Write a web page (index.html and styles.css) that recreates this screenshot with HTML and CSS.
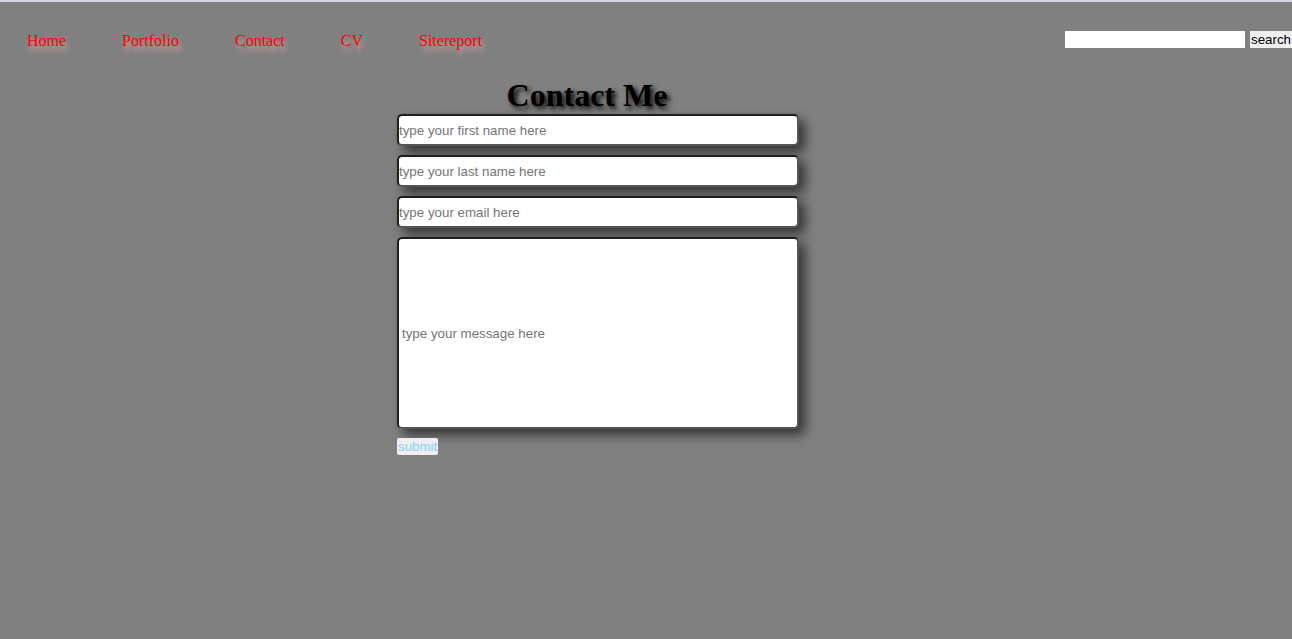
FILE: index.html
```html
<!DOCTYPE html>
<html>
<head>
<meta charset="utf-8">
<title>Contact Me</title>
<link rel="stylesheet" href="styles.css">
</head>
<body>
<header class="topbar">
  <nav class="nav">
    <a href="#" class="nav-link">Home</a>
    <a href="#" class="nav-link">Portfolio</a>
    <a href="#" class="nav-link">Contact</a>
    <a href="#" class="nav-link">CV</a>
    <a href="#" class="nav-link">Sitereport</a>
  </nav>
  <form class="search">
    <input type="text" class="search-input">
    <button type="button" class="search-btn">search</button>
  </form>
</header>
<main class="main">
  <h1 class="title">Contact Me</h1>
  <form class="contact">
    <input type="text" class="field" placeholder="type your first name here">
    <input type="text" class="field" placeholder="type your last name here">
    <input type="email" class="field" placeholder="type your email here">
    <textarea class="field message" placeholder="type your message here"></textarea>
    <button type="button" class="submit">submit</button>
  </form>
</main>
</body>
</html>
```
FILE: styles.css
```css
html {
  background: #808080;
}
body {
  margin: 0;
  border-top: 2px solid #d6d6de;
  min-height: 637px;
  background: #808080;
  font-family: "Liberation Serif", serif;
}
.topbar {
  display: flex;
  align-items: flex-start;
  justify-content: space-between;
  padding: 29px 0 28px 27px;
  height: 18px;
}
.nav {
  display: flex;
  gap: 56px;
  padding-top: 1px;
}
.nav-link {
  color: #ff0000;
  text-decoration: none;
  font-size: 16px;
  line-height: 18px;
  text-shadow: 2px 5px 4px #d9a0a8;
}
.search {
  display: flex;
  align-items: center;
  gap: 5px;
  margin: 0;
}
.search-input {
  width: 180px;
  height: 17px;
  box-sizing: border-box;
  border: none;
  background: #fff;
  padding: 0 2px;
  margin: 0;
}
.search-btn {
  height: 17px;
  padding: 0 1px;
  border: none;
  background: #efefef;
  font-family: "Liberation Sans", sans-serif;
  font-size: 13.33px;
  color: #000;
  line-height: 17px;
  margin: 0;
}
.main {
  padding-left: 397px;
}
.title {
  width: 380px;
  margin: 0;
  text-align: center;
  font-size: 32px;
  line-height: 36px;
  padding-bottom: 1px;
  font-weight: bold;
  color: #000;
  text-shadow: 3px 3px 5px #000;
}
.contact {
  display: flex;
  flex-direction: column;
  align-items: flex-start;
  gap: 9px;
  margin: 0;
}
.field {
  width: 402px;
  height: 32px;
  box-sizing: border-box;
  margin: 0;
  padding: 0;
  border: 2px solid;
  border-color: #1e1e1e #555 #555 #1e1e1e;
  border-radius: 5px;
  background: #fff;
  box-shadow: 6px 6px 12px rgba(0, 0, 0, 0.6);
  font-family: "Liberation Sans", sans-serif;
  font-size: 13.33px;
  color: #000;
}
.field::placeholder {
  color: #757575;
}
.message {
  height: 192px;
  padding: 87px 3px 0 3px;
  resize: none;
  display: block;
}
.submit {
  margin: 0;
  padding: 0 1px;
  height: 17px;
  border: none;
  border-radius: 2px;
  background: #efefef;
  color: #87cefa;
  font-family: "Liberation Sans", sans-serif;
  font-size: 13.33px;
  line-height: 17px;
}
```
